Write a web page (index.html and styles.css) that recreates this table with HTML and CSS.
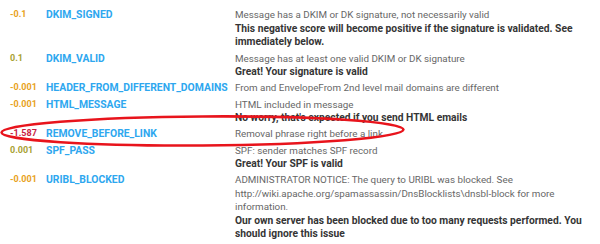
FILE: index.html
```html
<!DOCTYPE html>
<html>
<head>
<meta charset="utf-8">
<link rel="stylesheet" href="styles.css">
</head>
<body>
<div class="wrap">
  <div class="rules">
    <div class="row">
      <div class="score warn">-0.1</div>
      <div class="name">DKIM_SIGNED</div>
      <div class="desc">Message has a DKIM or DK signature, not necessarily valid<br><b>This negative score will become positive if the signature is validated. See immediately below.</b></div>
    </div>
    <div class="row">
      <div class="score good">0.1</div>
      <div class="name">DKIM_VALID</div>
      <div class="desc">Message has at least one valid DKIM or DK signature<br><b>Great! Your signature is valid</b></div>
    </div>
    <div class="row">
      <div class="score warn">-0.001</div>
      <div class="name">HEADER_FROM_DIFFERENT_DOMAINS</div>
      <div class="desc">From and EnvelopeFrom 2nd level mail domains are different</div>
    </div>
    <div class="row">
      <div class="score warn">-0.001</div>
      <div class="name">HTML_MESSAGE</div>
      <div class="desc">HTML included in message<br><b>No worry, that's expected if you send HTML emails</b></div>
    </div>
    <div class="row">
      <div class="score bad">-1.587</div>
      <div class="name">REMOVE_BEFORE_LINK</div>
      <div class="desc">Removal phrase right before a link</div>
    </div>
    <div class="row">
      <div class="score good">0.001</div>
      <div class="name">SPF_PASS</div>
      <div class="desc">SPF: sender matches SPF record<br><b>Great! Your SPF is valid</b></div>
    </div>
    <div class="row">
      <div class="score warn">-0.001</div>
      <div class="name">URIBL_BLOCKED</div>
      <div class="desc">ADMINISTRATOR NOTICE: The query to URIBL was blocked. See http://wiki.apache.org/spamassassin/DnsBlocklists\dnsbl-block for more information.<br><b>Our own server has been blocked due to too many requests performed. You should ignore this issue</b></div>
    </div>
  </div>
  <svg class="circle" width="600" height="244" viewBox="0 0 600 244">
    <ellipse cx="202.5" cy="131" rx="201" ry="14.5" fill="none" stroke="#e8141c" stroke-width="2.6" transform="rotate(-0.4 202 131)"/>
  </svg>
</div>
</body>
</html>
```
FILE: styles.css
```css
html, body {
  margin: 0;
  padding: 0;
  background: #ffffff;
}
body {
  font-family: Roboto, "Open Sans", sans-serif;
  font-size: 9.8px;
  line-height: 13.5px;
  color: #676767;
}
.wrap {
  position: relative;
  width: 600px;
  height: 244px;
  overflow: hidden;
}
.rules {
  display: flex;
  flex-direction: column;
  padding: 7px 0 0 10px;
}
.row {
  display: grid;
  grid-template-columns: 36px 189px 355px;
  align-items: start;
  padding: 1.375px 0;
}
.score {
  font-weight: 700;
  font-size: 9px;
}
.warn { color: #e8a21c; }
.good { color: #a8a233; }
.bad { color: #c81e44; }
.name {
  font-weight: 700;
  font-size: 10.39px;
  color: #2ea7ef;
}
.desc b {
  color: #353535;
  font-weight: 700;
  font-size: 10.28px;
}
.circle {
  position: absolute;
  left: 0;
  top: 0;
}
```
